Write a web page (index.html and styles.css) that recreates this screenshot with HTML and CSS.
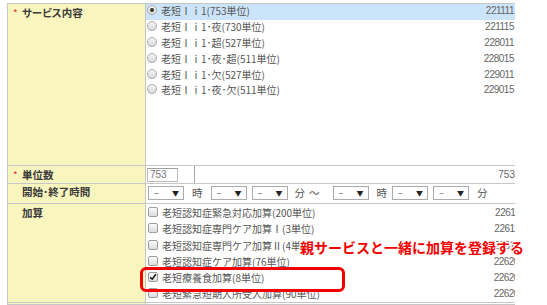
FILE: index.html
```html
<!DOCTYPE html>
<html lang="ja">
<head>
<meta charset="utf-8">
<title>サービス登録</title>
<link rel="stylesheet" href="styles.css">
</head>
<body>
<div class="frame">
  <div class="row">
    <div class="label"><span class="req">*</span>サービス内容</div>
    <div class="cell">
      <ul class="list list-service">
        <li class="item selected"><span class="radio on"></span><span class="name">老短Ⅰｉ1(753単位)</span><span class="code">221111</span></li>
        <li class="item"><span class="radio"></span><span class="name">老短Ⅰｉ1･夜(730単位)</span><span class="code">221115</span></li>
        <li class="item"><span class="radio"></span><span class="name">老短Ⅰｉ1･超(527単位)</span><span class="code">228011</span></li>
        <li class="item"><span class="radio"></span><span class="name">老短Ⅰｉ1･夜･超(511単位)</span><span class="code">228015</span></li>
        <li class="item"><span class="radio"></span><span class="name">老短Ⅰｉ1･欠(527単位)</span><span class="code">229011</span></li>
        <li class="item"><span class="radio"></span><span class="name">老短Ⅰｉ1･夜･欠(511単位)</span><span class="code">229015</span></li>
      </ul>
    </div>
  </div>
  <div class="row row-units">
    <div class="label"><span class="req">*</span>単位数</div>
    <div class="cell cell-units">
      <span class="input">753</span>
      <span class="units-total">753</span>
    </div>
  </div>
  <div class="row row-time">
    <div class="label">開始･終了時間</div>
    <div class="cell cell-time">
      <span class="select s1"><span>–</span><span class="arrow">▼</span></span>
      <span class="unit u-hour">時</span>
      <span class="select s2"><span>–</span><span class="arrow">▼</span></span>
      <span class="select s3"><span>–</span><span class="arrow">▼</span></span>
      <span class="unit u-min">分</span>
      <span class="unit u-tilde">〜</span>
      <span class="select s4"><span>–</span><span class="arrow">▼</span></span>
      <span class="unit u-hour2">時</span>
      <span class="select s5"><span>–</span><span class="arrow">▼</span></span>
      <span class="select s6"><span>–</span><span class="arrow">▼</span></span>
      <span class="unit u-min2">分</span>
    </div>
  </div>
  <div class="row">
    <div class="label">加算</div>
    <div class="cell">
      <ul class="list list-add">
        <li class="item"><span class="check"></span><span class="name">老短認知症緊急対応加算(200単位)</span><span class="code">226111</span></li>
        <li class="item"><span class="check"></span><span class="name">老短認知症専門ケア加算Ⅰ(3単位)</span><span class="code">226112</span></li>
        <li class="item"><span class="check"></span><span class="name">老短認知症専門ケア加算Ⅱ(4単位)</span><span class="code">226113</span></li>
        <li class="item"><span class="check"></span><span class="name">老短認知症ケア加算(76単位)</span><span class="code">226201</span></li>
        <li class="item"><span class="check on"><svg viewBox="0 0 10 10" width="8" height="8"><path d="M1.5 5.2 L4 7.8 L8.6 1.6" fill="none" stroke="#111" stroke-width="1.8"/></svg></span><span class="name">老短療養食加算(8単位)</span><span class="code">226202</span></li>
        <li class="item"><span class="check"></span><span class="name">老短緊急短期入所受入加算(90単位)</span><span class="code">226203</span></li>
      </ul>
    </div>
  </div>
  <div class="row row-next">
    <div class="label"></div>
    <div class="cell"></div>
  </div>
</div>
<div class="callout-box"></div>
<div class="callout-text">親サービスと一緒に加算を登録する</div>
</body>
</html>
```

FILE: styles.css
```css
html, body {
  margin: 0;
  padding: 0;
  height: 305px;
  overflow: hidden;
  background: #fff;
}
body {
  font-family: "Noto Sans CJK JP", "Liberation Sans", sans-serif;
  color: #555;
}
.frame {
  margin: 3px 0 0 7px;
  width: 507px;
  overflow: hidden;
  border-top: 1px solid #c6c6c6;
  border-left: 1px solid #c6c6c6;
}
.row {
  display: grid;
  grid-template-columns: 138px 369px;
  border-bottom: 1px solid #c6c6c6;
}
.label {
  background: #f9f5bf;
  border-right: 1px solid #c6c6c6;
  padding: 2px 0 0 14px;
  font-size: 10.5px;
  line-height: 13px;
  font-weight: 700;
  color: #3a3a3a;
  font-feature-settings: "palt";
  white-space: nowrap;
}
.req {
  display: inline-block;
  width: 9px;
  margin-left: -9px;
  color: #e8332d;
  font-size: 10px;
  font-weight: 400;
}
.cell {
  min-width: 0;
}
.list {
  list-style: none;
  margin: 0;
  padding: 0;
}
.list-service {
  height: 161px;
}
.list-add {
  padding-top: 2px;
  height: 96px;
  width: 379px;
}
.item {
  display: flex;
  align-items: flex-start;
  height: 15.9px;
  padding-left: 1px;
  padding-right: 1px;
  font-size: 10px;
  line-height: 13px;
  white-space: nowrap;
}
.list-add .item {
  height: 16.3px;
  padding-left: 2px;
}
.item.selected {
  background: #cce4fa;
}
.name {
  margin-left: 4px;
  color: #555;
}
.code {
  margin-left: auto;
  font-family: "Liberation Sans", sans-serif;
  font-size: 10px;
  letter-spacing: -0.5px;
  color: #666;
}
.radio {
  flex: none;
  width: 10px;
  height: 10px;
  margin-top: 1px;
  box-sizing: border-box;
  border: 1px solid #a9a9a9;
  border-radius: 50%;
  background: linear-gradient(#f4f4f4, #d9d9d9);
  display: flex;
  align-items: center;
  justify-content: center;
}
.radio.on::after {
  content: "";
  width: 4px;
  height: 4px;
  border-radius: 50%;
  background: #333;
}
.check {
  flex: none;
  width: 10px;
  height: 10px;
  margin-top: 1px;
  box-sizing: border-box;
  border: 1px solid #9d9d9d;
  border-radius: 2px;
  background: linear-gradient(#fafafa, #dcdcdc);
  display: flex;
  align-items: center;
  justify-content: center;
}
.check svg {
  display: block;
}
.row-units .label,
.row-units .cell {
  height: 17px;
}
.row-units .label {
  height: 15px;
}
.cell-units {
  display: flex;
  align-items: flex-start;
}
.input {
  margin: 2px 0 0 1px;
  width: 37px;
  height: 14px;
  box-sizing: border-box;
  border: 1px solid #b8b8b8;
  border-top-color: #a0a0a0;
  padding-left: 2px;
  font-family: "Liberation Sans", sans-serif;
  font-size: 10px;
  line-height: 12px;
  color: #777;
  background: #fff;
}
.units-total {
  margin-left: 16px;
  flex: none;
  width: 321px;
  height: 17px;
  box-sizing: border-box;
  border-left: 1px solid #a8a8a8;
  text-align: right;
  padding-right: 0;
  font-family: "Liberation Sans", sans-serif;
  font-size: 10px;
  line-height: 17px;
  color: #666;
}
.row-time .label,
.row-time .cell {
  height: 19px;
}
.row-time .label {
  padding-top: 1px;
  height: 18px;
}
.cell-time {
  display: flex;
  align-items: flex-start;
  padding-top: 2px;
  box-sizing: border-box;
}
.select {
  flex: none;
  width: 36px;
  height: 14px;
  box-sizing: border-box;
  border: 1px solid #aaa;
  background: #fff;
  display: flex;
  justify-content: space-between;
  align-items: center;
  padding: 0 4px 0 5px;
  font-size: 9px;
  line-height: 12px;
  color: #555;
}
.select .arrow {
  font-size: 7px;
  color: #222;
}
.unit {
  flex: none;
  font-size: 10.5px;
  line-height: 14px;
  color: #555;
}
.s1 { margin-left: 2px; }
.u-hour { margin-left: 8px; }
.s2 { margin-left: 8px; }
.s3 { margin-left: 5px; }
.u-min { margin-left: 7px; }
.u-tilde { margin-left: 4px; }
.s4 { margin-left: 13px; }
.u-hour2 { margin-left: 8px; }
.s5 { margin-left: 5px; }
.s6 { margin-left: 5px; }
.u-min2 { margin-left: 8px; }
.row-next .label,
.row-next .cell {
  height: 1px;
  padding: 0;
}
.callout-box {
  position: absolute;
  left: 140px;
  top: 267px;
  width: 205px;
  height: 25px;
  box-sizing: border-box;
  border: 3px solid #f20000;
  border-radius: 6px;
}
.callout-text {
  position: absolute;
  left: 300px;
  top: 238px;
  font-size: 14px;
  line-height: 18px;
  font-weight: 700;
  color: #f20000;
  white-space: nowrap;
  text-shadow: 1px 0 0 #fff, -1px 0 0 #fff, 0 1px 0 #fff, 0 -1px 0 #fff, 1px 1px 0 #fff, -1px -1px 0 #fff, 1px -1px 0 #fff, -1px 1px 0 #fff;
}
```
